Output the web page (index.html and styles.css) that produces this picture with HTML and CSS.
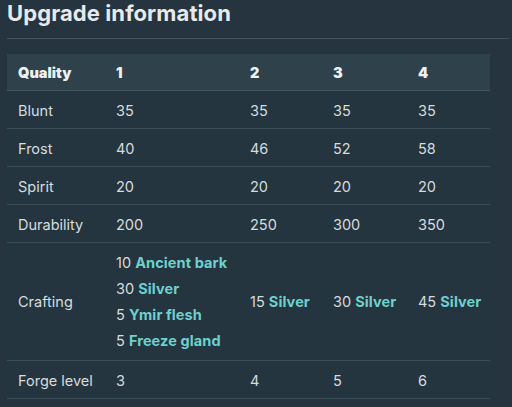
FILE: index.html
```html
<!DOCTYPE html>
<html>
<head>
<meta charset="utf-8">
<link rel="stylesheet" href="styles.css">
</head>
<body>
<div class="page">
  <h2 class="title">Upgrade information</h2>
  <table class="upgrades">
    <colgroup>
      <col class="c0"><col class="c1"><col class="c2"><col class="c3"><col class="c4">
    </colgroup>
    <thead>
      <tr><th>Quality</th><th>1</th><th>2</th><th>3</th><th>4</th></tr>
    </thead>
    <tbody>
      <tr><td>Blunt</td><td>35</td><td>35</td><td>35</td><td>35</td></tr>
      <tr><td>Frost</td><td>40</td><td>46</td><td>52</td><td>58</td></tr>
      <tr><td>Spirit</td><td>20</td><td>20</td><td>20</td><td>20</td></tr>
      <tr><td>Durability</td><td>200</td><td>250</td><td>300</td><td>350</td></tr>
      <tr class="crafting">
        <td>Crafting</td>
        <td>
          <div>10 <a class="item">Ancient bark</a></div>
          <div>30 <a class="item">Silver</a></div>
          <div>5 <a class="item">Ymir flesh</a></div>
          <div>5 <a class="item">Freeze gland</a></div>
        </td>
        <td>15 <a class="item">Silver</a></td>
        <td>30 <a class="item">Silver</a></td>
        <td>45 <a class="item">Silver</a></td>
      </tr>
      <tr><td>Forge level</td><td>3</td><td>4</td><td>5</td><td>6</td></tr>
    </tbody>
  </table>
</div>
</body>
</html>
```

FILE: styles.css
```css
html, body {
  margin: 0;
  padding: 0;
  background: #25343f;
}
body {
  font-family: Inter, "Noto Sans", sans-serif;
  color: #d6dbde;
  width: 512px;
  height: 407px;
  overflow: hidden;
}
.page {
  padding: 0 3px 0 7px;
}
.title {
  margin: 0;
  font-size: 22px;
  font-weight: 700;
  line-height: 27px;
  letter-spacing: 0.1px;
  color: #e6eaec;
  padding-bottom: 11px;
  border-bottom: 1px solid #3f525d;
  margin-bottom: 15px;
}
.upgrades {
  width: 483px;
  border-collapse: collapse;
  table-layout: fixed;
  font-size: 14.5px;
}
.c0 { width: 98px; }
.c1 { width: 134px; }
.c2 { width: 83px; }
.c3 { width: 85px; }
.c4 { width: 83px; }
.upgrades th, .upgrades td {
  text-align: left;
  padding: 7px 0 4px 11px;
  line-height: 26px;
  vertical-align: middle;
  border-bottom: 1px solid #3b4e58;
  white-space: nowrap;
}
.upgrades thead tr {
  background: #2f414a;
}
.upgrades th {
  font-weight: 900;
  color: #eef1f2;
  padding-top: 6px;
  padding-bottom: 4px;
  border-bottom: 1px solid #44575f;
}
.upgrades tbody tr {
  background: #25353f;
}
.crafting td {
  padding-top: 7px;
  padding-bottom: 6px;
}
.item {
  color: #6dd1cc;
  font-weight: 700;
  letter-spacing: 0.1px;
  text-decoration: none;
}
```
